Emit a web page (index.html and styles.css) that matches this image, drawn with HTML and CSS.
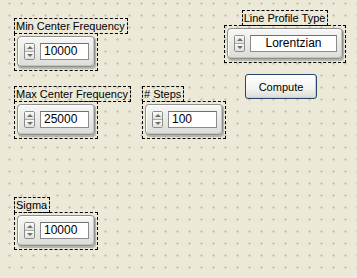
FILE: index.html
```html
<!DOCTYPE html>
<html>
<head>
<meta charset="utf-8">
<link rel="stylesheet" href="styles.css">
</head>
<body>
<div class="panel">
  <div class="ctl c-min">
    <div class="lbl">Min Center Frequency</div>
    <div class="box">
      <div class="frame">
        <div class="spin"><span class="half"><i class="up"></i></span><span class="half"><i class="dn"></i></span></div>
        <div class="field">10000</div>
      </div>
    </div>
  </div>

  <div class="ctl c-line">
    <div class="lbl">Line Profile Type</div>
    <div class="box">
      <div class="frame wide">
        <div class="spin"><span class="half"><i class="up"></i></span><span class="half"><i class="dn"></i></span></div>
        <div class="field center">Lorentzian</div>
      </div>
    </div>
  </div>

  <button class="btn">Compute</button>

  <div class="ctl c-max">
    <div class="lbl">Max Center Frequency</div>
    <div class="box">
      <div class="frame">
        <div class="spin"><span class="half"><i class="up"></i></span><span class="half"><i class="dn"></i></span></div>
        <div class="field">25000</div>
      </div>
    </div>
  </div>

  <div class="ctl c-steps">
    <div class="lbl"># Steps</div>
    <div class="box">
      <div class="frame">
        <div class="spin"><span class="half"><i class="up"></i></span><span class="half"><i class="dn"></i></span></div>
        <div class="field">100</div>
      </div>
    </div>
  </div>

  <div class="ctl c-sigma">
    <div class="lbl">Sigma</div>
    <div class="box">
      <div class="frame">
        <div class="spin"><span class="half"><i class="up"></i></span><span class="half"><i class="dn"></i></span></div>
        <div class="field">10000</div>
      </div>
    </div>
  </div>
</div>
</body>
</html>
```
FILE: styles.css
```css
html, body {
  margin: 0;
  padding: 0;
}
body {
  width: 357px;
  height: 278px;
  overflow: hidden;
  font-family: "Liberation Sans", Arial, sans-serif;
  font-size: 11px;
  color: #000;
  background-color: #ece9d8;
  background-image: radial-gradient(circle at 6.5px 6.5px, #c4c1b3 0.8px, rgba(236,233,216,0) 1.5px);
  background-size: 12px 12px;
  background-position: 3px 9px;
}
.panel {
  position: relative;
  width: 357px;
  height: 278px;
}
.ctl {
  position: absolute;
  display: flex;
  flex-direction: column;
  align-items: flex-start;
}
.c-min { left: 14px; top: 18px; }
.c-line { left: 224px; top: 10px; align-items: center; }
.c-max { left: 14px; top: 86px; }
.c-steps { left: 142px; top: 86px; }
.c-sigma { left: 14px; top: 197px; }

.lbl {
  border: 1px dashed #000;
  height: 14px;
  line-height: 14px;
  padding: 0 2px 0 1px;
  white-space: nowrap;
  position: relative;
  z-index: 1;
}
.box {
  border: 1px dashed #000;
  margin-top: -1px;
  padding: 2px 2px 3px 2px;
}
.frame {
  width: 65px;
  height: 17px;
  border: 1px solid #8e8e8e;
  border-radius: 4px;
  background: linear-gradient(#f7f7f5, #dcdcd8);
  box-shadow: inset 1px 1px 0 #ffffff, inset -1px -1px 0 #c4c4c0, 1px 1px 0 #b5b3aa, 1px 2px 1px rgba(80,80,70,0.35);
  display: flex;
  align-items: flex-start;
  gap: 5px;
  padding: 6px 5px 6px 6px;
  box-sizing: content-box;
}
.frame.wide {
  width: 103px;
}
.spin {
  width: 9px;
  height: 15px;
  border: 1px solid #8d8d8d;
  border-radius: 2px;
  background: #f4f4f2;
  display: flex;
  flex-direction: column;
  flex: none;
}
.half {
  flex: 1;
  display: flex;
  align-items: center;
  justify-content: center;
  background: linear-gradient(#fbfbfa, #e0e0dc);
}
.half + .half {
  border-top: 1px solid #a9a9a6;
}
.up, .dn {
  display: block;
  width: 0;
  height: 0;
  border-left: 3px solid transparent;
  border-right: 3px solid transparent;
}
.up { border-bottom: 3px solid #6e6e6e; }
.dn { border-top: 3px solid #6e6e6e; }
.field {
  flex: 1;
  height: 15px;
  line-height: 15px;
  border: 1px solid #8b8b8b;
  border-top-color: #6f6f6f;
  background: #fff;
  padding: 0 3px;
  white-space: nowrap;
  font-size: 12px;
}
.field.center {
  text-align: center;
}
.btn {
  position: absolute;
  left: 245px;
  top: 74px;
  width: 72px;
  height: 25px;
  border: 1px solid #24466f;
  border-radius: 3px;
  background: linear-gradient(#ffffff, #f3f3ef 60%, #dcdbd3);
  box-shadow: inset -1px -1px 0 #d0cec4;
  font-family: "Liberation Sans", Arial, sans-serif;
  font-size: 11px;
  color: #000;
  padding: 0;
}
```
